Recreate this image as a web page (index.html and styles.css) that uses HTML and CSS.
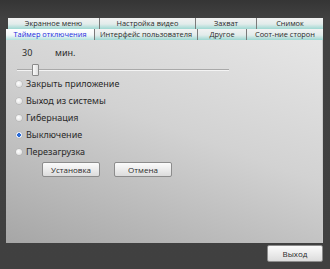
FILE: index.html
```html
<!DOCTYPE html>
<html>
<head>
<meta charset="utf-8">
<link rel="stylesheet" href="styles.css">
</head>
<body>
<div class="window">
  <div class="tabs row1">
    <div class="tab w92">Экранное меню</div>
    <div class="tab w97">Настройка видео</div>
    <div class="tab w61">Захват</div>
    <div class="tab w66 last">Снимок</div>
  </div>
  <div class="tabs row2">
    <div class="tab active w89">Таймер отключения</div>
    <div class="tab w103">Интерфейс пользователя</div>
    <div class="tab w49">Другое</div>
    <div class="tab w76 last">Соот-ние сторон</div>
  </div>
  <div class="panel">
    <div class="timer">
      <span class="num">30</span>
      <span class="unit">мин.</span>
    </div>
    <div class="slider">
      <div class="track"></div>
      <div class="thumb"></div>
    </div>
    <div class="options">
      <label class="opt"><span class="radio"></span>Закрыть приложение</label>
      <label class="opt"><span class="radio"></span>Выход из системы</label>
      <label class="opt"><span class="radio"></span>Гибернация</label>
      <label class="opt"><span class="radio checked"></span>Выключение</label>
      <label class="opt"><span class="radio"></span>Перезагрузка</label>
    </div>
    <div class="actions">
      <button class="btn">Установка</button>
      <button class="btn">Отмена</button>
    </div>
  </div>
  <div class="footer">
    <button class="btn exit">Выход</button>
  </div>
</div>
</body>
</html>
```
FILE: styles.css
```css
* { box-sizing: border-box; }
html, body { margin: 0; padding: 0; }
body {
  width: 330px;
  height: 269px;
  background: #404040;
  font-family: "Noto Sans", "DejaVu Sans", sans-serif;
  font-size: 9px;
  color: #222;
  overflow: hidden;
}
.window {
  height: 269px;
  padding: 18px 7px 0 6px;
  background: linear-gradient(#353535, #414141 18px, #404040);
}
.tabs {
  display: flex;
}
.row1 { margin-left: 2px; height: 11px; }
.row2 { height: 11px; }
.tab {
  flex: none;
  display: flex;
  align-items: center;
  justify-content: center;
  white-space: nowrap;
  font-family: "Open Sans", "Noto Sans", sans-serif;
  font-size: 7.4px;
  line-height: 1;
  color: #2a2a2a;
  background: linear-gradient(#f2f2f2, #e2eceb 55%, #9ed8d2);
  border-right: 1px solid #7a7a7a;
}
.tab.last { border-right: none; }
.tab.active {
  color: #1c2ee0;
  background: linear-gradient(#ffffff, #f3f8f8 55%, #b4e2de);
}
.w92 { width: 92px; }
.w97 { width: 96px; }
.w61 { width: 61px; }
.w66 { width: 66px; }
.w89 { width: 89px; }
.w103 { width: 103px; }
.w49 { width: 49px; }
.w76 { width: 76px; }
.panel {
  height: 203px;
  border-right: 1px solid #c8c8c8;
  background: linear-gradient(200deg, #e6e6e6 0%, #d2d2d2 45%, #a6a6a6 100%);
  padding: 6px 0 0 10px;
}
.timer {
  display: flex;
  height: 12px;
  align-items: center;
  padding-left: 6px;
  color: #2a2a2a;
}
.timer .num { width: 33px; }
.slider {
  position: relative;
  width: 212px;
  height: 12px;
  margin: 6px 0 0 1px;
}
.track {
  position: absolute;
  left: 0;
  right: 0;
  top: 5px;
  height: 2px;
  background: #cfcfcf;
  border-top: 1px solid #a9a9a9;
  border-bottom: 1px solid #f4f4f4;
}
.thumb {
  position: absolute;
  left: 15px;
  top: 0;
  width: 7px;
  height: 12px;
  border: 1px solid #8a8a8a;
  border-radius: 1px;
  background: linear-gradient(90deg, #fafafa, #e0e0e0);
}
.options {
  display: flex;
  flex-direction: column;
  margin-top: -1px;
  margin-left: 0;
}
.opt {
  display: flex;
  align-items: center;
  height: 17px;
  font-size: 9px;
  color: #2a2a2a;
}
.radio {
  width: 6px;
  height: 6px;
  border-radius: 50%;
  margin-right: 4px;
  background: radial-gradient(circle at 40% 40%, #ffffff, #d8d8d8);
  box-shadow: 0 0 0 0.5px #b0b0b0;
}
.radio.checked {
  background: radial-gradient(circle, #2a6bd6 0 1.6px, #e8f0ff 2px, #cfd8e8);
}
.actions {
  display: flex;
  gap: 14px;
  margin: 2px 0 0 26px;
}
.btn {
  font-family: "Open Sans", "Noto Sans", sans-serif;
  font-size: 8px;
  color: #2a2a2a;
  width: 58px;
  height: 15px;
  padding: 0;
  border: 1px solid #8c8c8c;
  border-radius: 2px;
  background: linear-gradient(#fbfbfb, #ececec 50%, #dcdcdc);
}
.footer {
  display: flex;
  justify-content: flex-end;
  padding-top: 2px;
}
.btn.exit {
  width: 56px;
  height: 17px;
}
```
